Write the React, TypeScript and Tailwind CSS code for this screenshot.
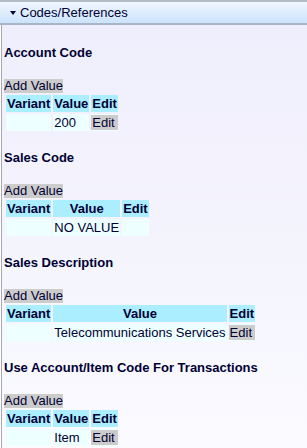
import React from 'react';

type Row = { variant: string; value: string; edit: boolean };
type Section = { title: string; rows: Row[] };

const SECTIONS: Section[] = [
  { title: 'Account Code', rows: [{ variant: '', value: '200', edit: true }] },
  { title: 'Sales Code', rows: [{ variant: '', value: 'NO VALUE', edit: false }] },
  { title: 'Sales Description', rows: [{ variant: '', value: 'Telecommunications Services', edit: true }] },
  { title: 'Use Account/Item Code For Transactions', rows: [{ variant: '', value: 'Item', edit: true }] },
];

const CodeTable: React.FC<{ section: Section }> = ({ section }) => (
  <div className="flex flex-col items-start">
    <h4 className="text-[13px] leading-[15px] font-bold">{section.title}</h4>
    <span className="mt-[19px] h-[14px] leading-[14px] bg-[#cccccc]">Add Value</span>
    <table className="border-separate border-spacing-[2px] leading-[15px]">
      <thead>
        <tr>
          <th className="bg-[#aaeeff] px-px py-px font-bold">Variant</th>
          <th className="bg-[#aaeeff] px-px py-px font-bold">Value</th>
          <th className="bg-[#aaeeff] px-px py-px font-bold">Edit</th>
        </tr>
      </thead>
      <tbody>
        {section.rows.map((r, i) => (
          <tr key={i}>
            <td className="bg-[#eeffff] px-px py-px text-left">{r.variant}</td>
            <td className="bg-[#eeffff] px-px py-px text-left">{r.value}</td>
            <td className="bg-[#eeffff] px-0 py-px text-left">
              {r.edit && <span className="block bg-[#cccccc] px-px">Edit</span>}
            </td>
          </tr>
        ))}
      </tbody>
    </table>
  </div>
);

export default function App() {
  return (
    <div className="w-[307px] h-[448px] overflow-hidden flex flex-col text-[13px] text-[#000033]" style={{ fontFamily: '"Liberation Sans", Arial, sans-serif' }}>
      <div className="h-[25px] shrink-0 border-t-2 border-b-2 border-t-[#b4bcc8] border-b-[#a9b6c8] bg-gradient-to-b from-[#f1f7ff] to-[#cbe3fb] flex items-center pl-[10px] gap-[4px]">
        <svg width="6" height="4" viewBox="0 0 6 4" className="mt-px">
          <polygon points="0,0 6,0 3,4" fill="#000033" />
        </svg>
        <span className="text-[13px] leading-[16px]">Codes/References</span>
      </div>
      <div className="flex-1 ml-px border-l border-[#a8a8b0] bg-gradient-to-b from-[#efeefc] to-[#fafaff] pl-[2px] pt-[20px] flex flex-col gap-[17px]">
        {SECTIONS.map(s => (
          <CodeTable key={s.title} section={s} />
        ))}
      </div>
    </div>
  );
}
